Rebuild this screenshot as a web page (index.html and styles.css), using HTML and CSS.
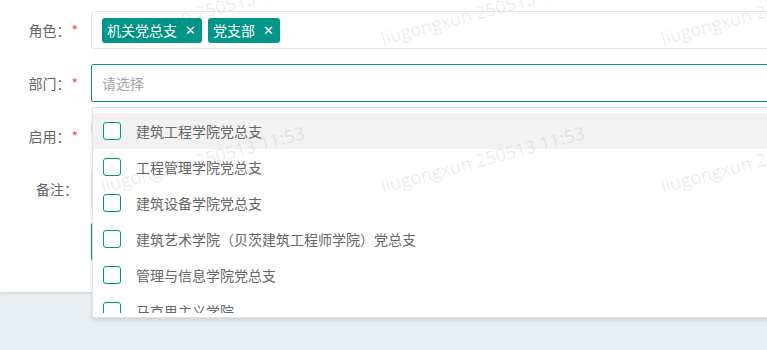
FILE: index.html
```html
<!DOCTYPE html>
<html lang="zh-CN">
<head>
    <meta charset="UTF-8">
    <meta name="viewport" content="width=device-width, initial-scale=1.0">
    <title>用户编辑</title>
    <link rel="stylesheet" href="styles.css">
</head>
<body>
    <div class="panel">
        <form class="form">
            <div class="form-item">
                <label class="form-label">角色：<span class="req">*</span></label>
                <div class="input-block">
                    <div class="tag-input">
                        <span class="tag">机关党总支<i class="tag-close">✕</i></span>
                        <span class="tag">党支部<i class="tag-close">✕</i></span>
                    </div>
                </div>
            </div>

            <div class="form-item">
                <label class="form-label">部门：<span class="req">*</span></label>
                <div class="input-block select">
                    <input class="input focused" type="text" placeholder="请选择">
                    <div class="dropdown">
                        <dl class="options">
                            <dd class="option hover"><span class="check"></span>建筑工程学院党总支</dd>
                            <dd class="option"><span class="check"></span>工程管理学院党总支</dd>
                            <dd class="option"><span class="check"></span>建筑设备学院党总支</dd>
                            <dd class="option"><span class="check"></span>建筑艺术学院（贝茨建筑工程师学院）党总支</dd>
                            <dd class="option"><span class="check"></span>管理与信息学院党总支</dd>
                            <dd class="option"><span class="check"></span>马克思主义学院</dd>
                            <dd class="option"><span class="check"></span>基础部党总支</dd>
                        </dl>
                    </div>
                </div>
            </div>

            <div class="form-item">
                <label class="form-label">启用：<span class="req">*</span></label>
                <div class="input-block">
                    <span class="switch"><em>ON</em><i></i></span>
                </div>
            </div>

            <div class="form-item">
                <label class="form-label">备注：</label>
                <div class="input-block">
                    <input class="input" type="text">
                </div>
            </div>

            <div class="form-item">
                <div class="form-label"></div>
                <div class="input-block">
                    <button class="btn" type="button">立即提交</button>
                </div>
            </div>
        </form>
    </div>

    <!-- watermark sits on top of everything -->
    <div class="watermark">
        <span class="wm wm-1">liugongxun 250513 11:53</span>
        <span class="wm wm-2">liugongxun 250513 11:53</span>
        <span class="wm wm-3">liugongxun 250513 11:53</span>
        <span class="wm wm-4">liugongxun 250513 11:53</span>
        <span class="wm wm-5">liugongxun 250513 11:53</span>
        <span class="wm wm-6">liugongxun 250513 11:53</span>
    </div>
</body>
</html>
```

FILE: styles.css
```css
html, body {
    margin: 0;
    padding: 0;
    overflow: hidden;
}
body {
    background: #e7edf0;
    font-family: "Noto Sans CJK SC", "Noto Sans", sans-serif;
    font-size: 14px;
    color: #666;
    position: relative;
    height: 350px;
}
.panel {
    background: #fff;
    padding: 11px 0 31px;
    box-shadow: 0 1px 2px rgba(0, 0, 0, 0.12);
}
.form {
    margin: 0;
}
.form-item {
    display: flex;
    align-items: center;
    margin-bottom: 15px;
}
.form-item:last-child {
    margin-bottom: 0;
}
.form-label {
    width: 78px;
    flex: none;
    text-align: right;
    line-height: 20px;
    color: #666;
    margin-right: 13px;
}
.req {
    color: #ff4a4a;
    margin-left: 1px;
}
.input-block {
    width: 720px;
    flex: none;
    height: 38px;
    position: relative;
}
.input {
    box-sizing: border-box;
    width: 100%;
    height: 38px;
    border: 1px solid #e6e6e6;
    border-radius: 2px;
    padding: 0 10px;
    font: inherit;
    color: #333;
    outline: none;
    background: #fff;
}
.input::placeholder {
    color: #a5a5a5;
}
.input.focused {
    border-color: #009688;
}

/* multi select tags */
.tag-input {
    box-sizing: border-box;
    height: 38px;
    border: 1px solid #e6e6e6;
    border-radius: 2px;
    display: flex;
    align-items: center;
    gap: 6px;
    padding: 0 10px;
}
.tag {
    display: inline-flex;
    align-items: center;
    height: 25px;
    padding: 0 6px 0 5px;
    border-radius: 3px;
    background: #009688;
    color: #fff;
    line-height: 25px;
}
.tag-close {
    font-style: normal;
    font-family: "DejaVu Sans", sans-serif;
    font-size: 13px;
    font-weight: bold;
    margin-left: 8px;
}

/* dropdown */
.dropdown {
    position: absolute;
    top: 43px;
    left: 1px;
    right: 0;
    box-sizing: border-box;
    background: #fff;
    border: 1px solid #e2e2e2;
    border-radius: 2px;
    box-shadow: 0 2px 4px rgba(0, 0, 0, 0.12);
    padding: 5px 0 4px;
    z-index: 10;
}
.options {
    margin: 0;
    height: 200px;
    overflow: hidden;
}
.option {
    margin: 0;
    height: 36px;
    display: flex;
    align-items: center;
    padding-left: 10px;
    color: #666;
    white-space: nowrap;
}
.option.hover {
    background: #f2f2f2;
}
.check {
    width: 18px;
    height: 18px;
    box-sizing: border-box;
    border: 1px solid #009688;
    border-radius: 3px;
    background: #fff;
    margin-right: 15px;
    flex: none;
}

/* switch */
.switch {
    display: inline-flex;
    align-items: center;
    box-sizing: border-box;
    height: 22px;
    min-width: 44px;
    border: 1px solid #d2d2d2;
    border-radius: 20px;
    padding: 0 6px 0 22px;
    font-size: 12px;
    color: #999;
}
.switch em {
    font-style: normal;
}
.btn {
    height: 38px;
    padding: 0 18px;
    border: none;
    border-radius: 2px;
    background: #009688;
    color: #fff;
    font: inherit;
}

/* watermark */
.watermark {
    position: absolute;
    inset: 0;
    pointer-events: none;
    z-index: 100;
}
.wm {
    position: absolute;
    font-family: "Open Sans", sans-serif;
    font-size: 18px;
    line-height: 18px;
    color: rgba(0, 0, 0, 0.09);
    white-space: nowrap;
    transform-origin: 0 16px;
    transform: rotate(-15deg);
}
.wm-1 { left: 103px; top: 29px; }
.wm-2 { left: 383px; top: 29px; }
.wm-3 { left: 663px; top: 29px; }
.wm-4 { left: 103px; top: 177px; }
.wm-5 { left: 383px; top: 177px; }
.wm-6 { left: 663px; top: 177px; }
```
